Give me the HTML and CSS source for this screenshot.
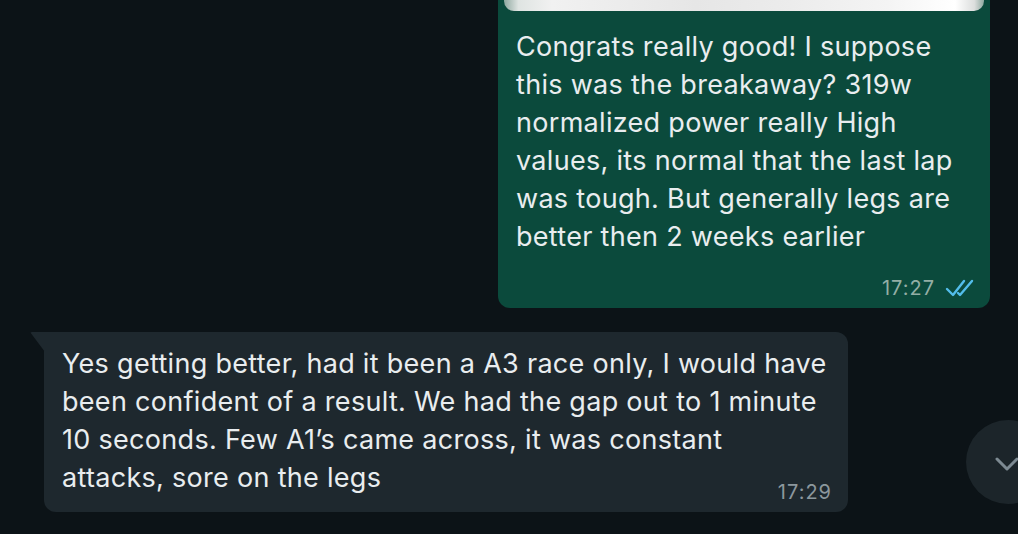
FILE: index.html
```html
<!DOCTYPE html>
<html lang="en">
<head>
  <meta charset="UTF-8">
  <title>Chat</title>
  <link rel="stylesheet" href="styles.css">
</head>
<body>

<div class="chat">
  <div class="row row-out">
    <div class="bubble bubble-out">
      <div class="photo"></div>
      <p class="text">Congrats really good! I suppose this was the breakaway? 319w normalized power really High values, its normal that the last lap was tough. But generally legs are better then 2 weeks earlier</p>
      <div class="meta">
        <span class="time">17:27</span>
        <svg class="ticks" width="30" height="20" viewBox="0 0 30 20">
          <path d="M2 11 L8 17 L19 3" fill="none" stroke="#53bdeb" stroke-width="2.4" stroke-linecap="round" stroke-linejoin="round"/>
          <path d="M13 15 L15 17 L27 3" fill="none" stroke="#53bdeb" stroke-width="2.4" stroke-linecap="round" stroke-linejoin="round"/>
        </svg>
      </div>
    </div>
  </div>

  <div class="row row-in">
    <div class="bubble bubble-in">
      <p class="text"><span>Yes getting better, had it been a A3 race only, I would have been confident of a result. We had the gap out to 1 minute 10 seconds. Few A1’s came across, it was constant attacks, sore on the legs</span><span class="time time-in">17:29</span></p>
    </div>
  </div>
</div>

<button class="scroll-down" aria-label="Scroll to bottom">
  <svg width="26" height="18" viewBox="0 0 26 18">
    <path d="M3 4 L13 14 L23 4" fill="none" stroke="#7d8a92" stroke-width="3" stroke-linecap="round" stroke-linejoin="round"/>
  </svg>
</button>

</body>
</html>
```

FILE: styles.css
```css
:root {
  --bg-color: #0c1317;
  --out-bg: #0b4a3c;
  --in-bg: #1e282e;
  --text-color: #e9edef;
  --meta-out: #93aea5;
  --meta-in: #8c979d;
}

* {
  box-sizing: border-box;
}

html, body {
  height: 100%;
}

body {
  margin: 0;
  background-color: var(--bg-color);
  color: var(--text-color);
  font-family: 'Inter', 'Noto Sans', sans-serif;
  overflow: hidden;
  position: relative;
}

.chat {
  display: flex;
  flex-direction: column;
  gap: 24px;
  margin-top: -200px;
}

.row {
  display: flex;
}

.row-out {
  justify-content: flex-end;
  padding-right: 28px;
}

.row-in {
  padding-left: 44px;
}

.bubble {
  position: relative;
  display: flex;
  flex-direction: column;
  border-radius: 12px;
}

.bubble-out {
  width: 492px;
  background-color: var(--out-bg);
  padding: 6px 6px 8px;
}

.photo {
  height: 205px;
  border-radius: 10px;
  background:
    linear-gradient(90deg, #8fa8a0 0%, #dfe4e2 3%, #f1f1f1 10%, #e6e6e6 40%, #ececec 60%, #f4f4f4 80%, #ffffff 94%, #dcdedd 98%, #8fa8a0 100%);
}

.text {
  margin: 0;
  font-size: 27px;
  line-height: 38px;
  letter-spacing: 0.3px;
}

.bubble-out .text {
  padding: 17px 12px 0;
}

.meta {
  align-self: flex-end;
  display: flex;
  align-items: center;
  gap: 10px;
  height: 24px;
  margin-top: 20px;
  margin-right: 9px;
  font-size: 20px;
  letter-spacing: 1px;
  color: var(--meta-out);
}

.ticks {
  display: block;
}

.bubble-in {
  width: 804px;
  background-color: var(--in-bg);
  border-top-left-radius: 0;
  padding: 13px 16px 8px 18px;
}

.bubble-in::before {
  content: "";
  position: absolute;
  top: 0;
  left: -14px;
  width: 15px;
  height: 20px;
  background-color: var(--in-bg);
  clip-path: polygon(0 0, 100% 0, 100% 100%);
  border-top-left-radius: 2px;
}

.time-in {
  float: right;
  margin-top: 21px;
  height: 24px;
  line-height: 24px;
  font-size: 20px;
  letter-spacing: 1px;
  color: var(--meta-in);
}

.scroll-down {
  position: absolute;
  left: 966px;
  top: 420px;
  width: 84px;
  height: 84px;
  border: none;
  border-radius: 50%;
  background-color: #1c252a;
  padding: 0;
  display: flex;
  align-items: center;
  justify-content: flex-start;
}

.scroll-down svg {
  margin-left: 28px;
  margin-top: 4px;
}
```
